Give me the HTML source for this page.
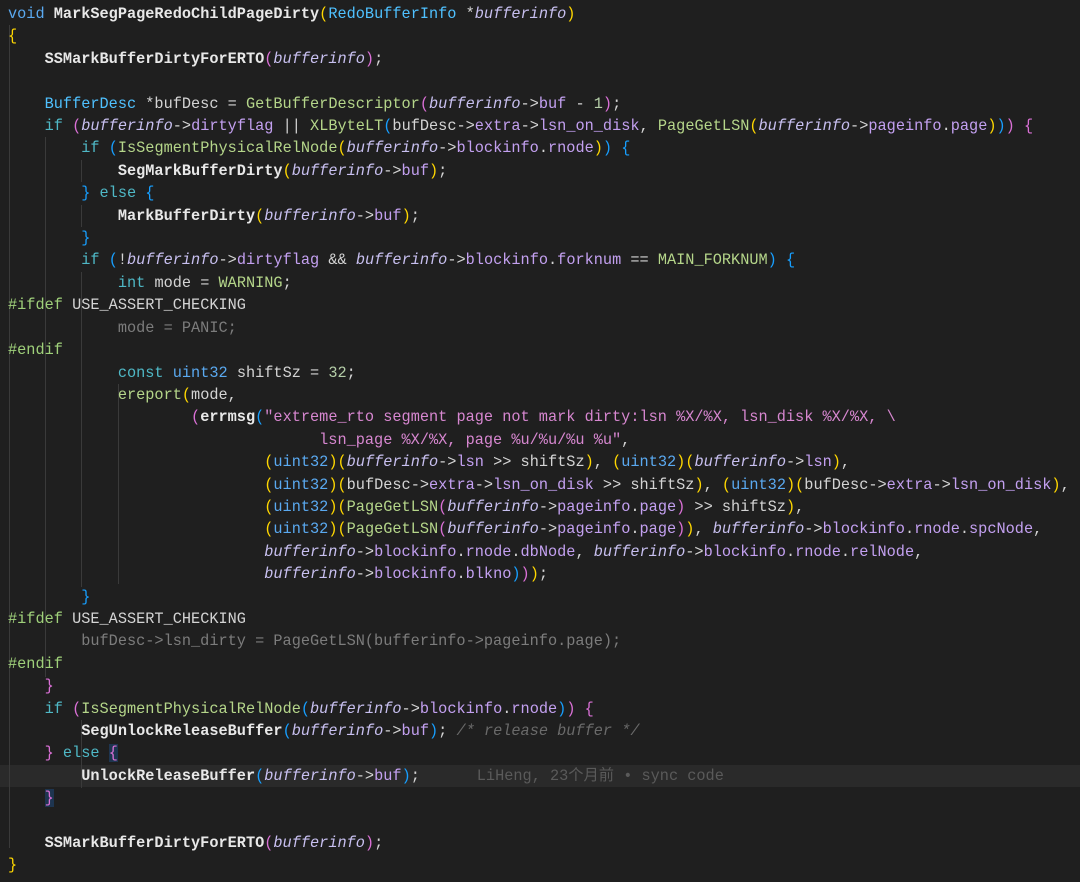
<!DOCTYPE html>
<html><head><meta charset="utf-8"><style>
body{margin:0;background:#1f1f1f;width:1080px;height:882px;overflow:hidden;position:relative}
pre{position:absolute;left:8px;top:3px;margin:0;font-family:"Liberation Mono","Noto Sans CJK SC",monospace;font-size:15.25px;line-height:22.4px;color:#d4d4d4;white-space:pre;z-index:2}
.hl{position:absolute;left:0;top:765px;width:1080px;height:22.4px;background:#2a2a2a;z-index:1}
.g1{position:absolute;width:1px;background:#3a3a3a;z-index:1}
.k{color:#4fb8c6}.t{color:#5aa9f0}.fn{color:#e8e8e8;font-weight:bold}.gf{color:#b5d68a}
.v{color:#c8c0f0;font-style:italic}.m{color:#c3a0f0}.ty{color:#4fc1ff}.pp{color:#9fd07a}
.s{color:#d787d0}.c{color:#6a6a6a;font-style:italic}.d{color:#7c7c7c}.n{color:#b5cea8}
.y{color:#ffd700}.p{color:#da70d6}.b{color:#179fff}.bl{color:#5a5a5a;margin-left:2px}
</style></head><body>
<div class="hl"></div>
<div class="g1" style="left:9px;top:25px;height:823px"></div>
<div class="g1" style="left:45px;top:137px;height:540px"></div>
<div class="g1" style="left:81px;top:160px;height:22px"></div>
<div class="g1" style="left:81px;top:205px;height:22px"></div>
<div class="g1" style="left:81px;top:272px;height:315px"></div>
<div class="g1" style="left:81px;top:720px;height:68px"></div>
<div class="g1" style="left:118px;top:384px;height:200px"></div>
<pre><span class="t">void</span> <span class="fn">MarkSegPageRedoChildPageDirty</span><span class="y">(</span><span class="ty">RedoBufferInfo</span> *<span class="v">bufferinfo</span><span class="y">)</span>
<span class="y">{</span>
    <span class="fn">SSMarkBufferDirtyForERTO</span><span class="p">(</span><span class="v">bufferinfo</span><span class="p">)</span>;

    <span class="ty">BufferDesc</span> *bufDesc = <span class="gf">GetBufferDescriptor</span><span class="p">(</span><span class="v">bufferinfo</span>-&gt;<span class="m">buf</span> - <span class="n">1</span><span class="p">)</span>;
    <span class="k">if</span> <span class="p">(</span><span class="v">bufferinfo</span>-&gt;<span class="m">dirtyflag</span> || <span class="gf">XLByteLT</span><span class="b">(</span>bufDesc-&gt;<span class="m">extra</span>-&gt;<span class="m">lsn_on_disk</span>, <span class="gf">PageGetLSN</span><span class="y">(</span><span class="v">bufferinfo</span>-&gt;<span class="m">pageinfo</span>.<span class="m">page</span><span class="y">)</span><span class="b">)</span><span class="p">)</span> <span class="p">{</span>
        <span class="k">if</span> <span class="b">(</span><span class="gf">IsSegmentPhysicalRelNode</span><span class="y">(</span><span class="v">bufferinfo</span>-&gt;<span class="m">blockinfo</span>.<span class="m">rnode</span><span class="y">)</span><span class="b">)</span> <span class="b">{</span>
            <span class="fn">SegMarkBufferDirty</span><span class="y">(</span><span class="v">bufferinfo</span>-&gt;<span class="m">buf</span><span class="y">)</span>;
        <span class="b">}</span> <span class="k">else</span> <span class="b">{</span>
            <span class="fn">MarkBufferDirty</span><span class="y">(</span><span class="v">bufferinfo</span>-&gt;<span class="m">buf</span><span class="y">)</span>;
        <span class="b">}</span>
        <span class="k">if</span> <span class="b">(</span>!<span class="v">bufferinfo</span>-&gt;<span class="m">dirtyflag</span> &amp;&amp; <span class="v">bufferinfo</span>-&gt;<span class="m">blockinfo</span>.<span class="m">forknum</span> == <span class="gf">MAIN_FORKNUM</span><span class="b">)</span> <span class="b">{</span>
            <span class="k">int</span> mode = <span class="gf">WARNING</span>;
<span class="pp">#ifdef</span> USE_ASSERT_CHECKING
<span class="d">            mode = PANIC;</span>
<span class="pp">#endif</span>
            <span class="k">const</span> <span class="t">uint32</span> shiftSz = <span class="n">32</span>;
            <span class="gf">ereport</span><span class="y">(</span>mode,
                    <span class="p">(</span><span class="fn">errmsg</span><span class="b">(</span><span class="s">"extreme_rto segment page not mark dirty:lsn %X/%X, lsn_disk %X/%X, \</span>
<span class="s">                                  lsn_page %X/%X, page %u/%u/%u %u"</span>,
                            <span class="y">(</span><span class="t">uint32</span><span class="y">)</span><span class="y">(</span><span class="v">bufferinfo</span>-&gt;<span class="m">lsn</span> &gt;&gt; shiftSz<span class="y">)</span>, <span class="y">(</span><span class="t">uint32</span><span class="y">)</span><span class="y">(</span><span class="v">bufferinfo</span>-&gt;<span class="m">lsn</span><span class="y">)</span>,
                            <span class="y">(</span><span class="t">uint32</span><span class="y">)</span><span class="y">(</span>bufDesc-&gt;<span class="m">extra</span>-&gt;<span class="m">lsn_on_disk</span> &gt;&gt; shiftSz<span class="y">)</span>, <span class="y">(</span><span class="t">uint32</span><span class="y">)</span><span class="y">(</span>bufDesc-&gt;<span class="m">extra</span>-&gt;<span class="m">lsn_on_disk</span><span class="y">)</span>,
                            <span class="y">(</span><span class="t">uint32</span><span class="y">)</span><span class="y">(</span><span class="gf">PageGetLSN</span><span class="p">(</span><span class="v">bufferinfo</span>-&gt;<span class="m">pageinfo</span>.<span class="m">page</span><span class="p">)</span> &gt;&gt; shiftSz<span class="y">)</span>,
                            <span class="y">(</span><span class="t">uint32</span><span class="y">)</span><span class="y">(</span><span class="gf">PageGetLSN</span><span class="p">(</span><span class="v">bufferinfo</span>-&gt;<span class="m">pageinfo</span>.<span class="m">page</span><span class="p">)</span><span class="y">)</span>, <span class="v">bufferinfo</span>-&gt;<span class="m">blockinfo</span>.<span class="m">rnode</span>.<span class="m">spcNode</span>,
                            <span class="v">bufferinfo</span>-&gt;<span class="m">blockinfo</span>.<span class="m">rnode</span>.<span class="m">dbNode</span>, <span class="v">bufferinfo</span>-&gt;<span class="m">blockinfo</span>.<span class="m">rnode</span>.<span class="m">relNode</span>,
                            <span class="v">bufferinfo</span>-&gt;<span class="m">blockinfo</span>.<span class="m">blkno</span><span class="b">)</span><span class="p">)</span><span class="y">)</span>;
        <span class="b">}</span>
<span class="pp">#ifdef</span> USE_ASSERT_CHECKING
<span class="d">        bufDesc-&gt;lsn_dirty = PageGetLSN(bufferinfo-&gt;pageinfo.page);</span>
<span class="pp">#endif</span>
    <span class="p">}</span>
    <span class="k">if</span> <span class="p">(</span><span class="gf">IsSegmentPhysicalRelNode</span><span class="b">(</span><span class="v">bufferinfo</span>-&gt;<span class="m">blockinfo</span>.<span class="m">rnode</span><span class="b">)</span><span class="p">)</span> <span class="p">{</span>
        <span class="fn">SegUnlockReleaseBuffer</span><span class="b">(</span><span class="v">bufferinfo</span>-&gt;<span class="m">buf</span><span class="b">)</span>; <span class="c">/* release buffer */</span>
    <span class="p">}</span> <span class="k">else</span> <span class="p" style="background:#1e3550">{</span>
        <span class="fn">UnlockReleaseBuffer</span><span class="b">(</span><span class="v">bufferinfo</span>-&gt;<span class="m">buf</span><span class="b">)</span>;      <span class="bl">LiHeng, 23个月前 • sync code</span>
    <span class="p" style="background:#1e3550">}</span>

    <span class="fn">SSMarkBufferDirtyForERTO</span><span class="p">(</span><span class="v">bufferinfo</span><span class="p">)</span>;
<span class="y">}</span></pre>
</body></html>
